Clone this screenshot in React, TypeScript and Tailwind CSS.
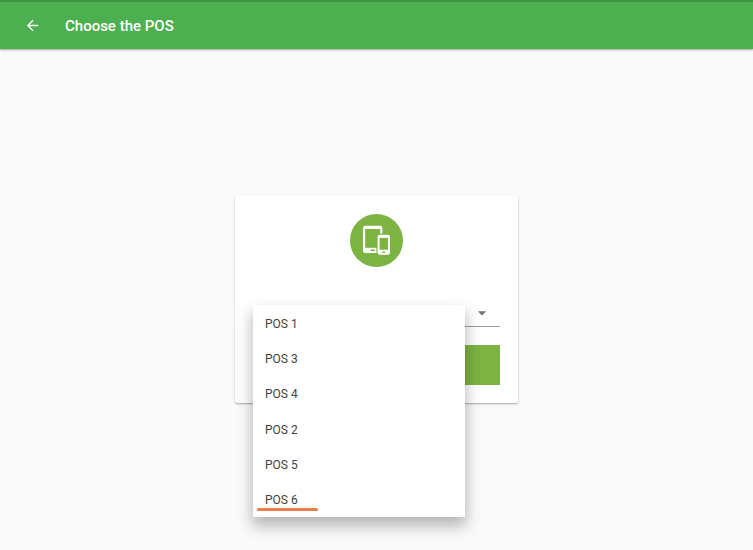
import { useState } from "react";
import { MdArrowBack, MdArrowDropDown } from "react-icons/md";

const terminals = ["POS 1", "POS 3", "POS 4", "POS 2", "POS 5", "POS 6"];

function DevicesIcon() {
  return (
    <svg viewBox="0 0 53 53" className="w-full h-full" aria-hidden="true">
      {/* Tablet */}
      <rect x="13" y="11.8" width="19.4" height="27.2" rx="2.2" fill="#fff" />
      <rect x="15.2" y="15" width="15" height="18.8" fill="#7cb342" />
      <rect x="20.6" y="35.6" width="4.4" height="1.5" rx="0.5" fill="#7cb342" />
      {/* Phone, with a gap cut out of the tablet behind it */}
      <rect x="26.4" y="19.4" width="15" height="22.6" rx="2" fill="#7cb342" />
      <rect x="27.6" y="20.8" width="12.4" height="20" rx="2.2" fill="#fff" />
      <rect x="29.6" y="23.9" width="8.4" height="11.8" fill="#7cb342" />
      <rect x="32.3" y="37.5" width="3" height="1.4" rx="0.6" fill="#7cb342" />
    </svg>
  );
}

export default function App() {
  const [open, setOpen] = useState(true);
  const [selected, setSelected] = useState("");

  const choose = (name: string) => {
    setSelected(name);
    setOpen(false);
  };

  return (
    <div className="min-h-screen flex flex-col bg-[#fafafa] font-[Roboto,sans-serif]">
      {/* App bar */}
      <header className="relative flex items-center gap-6 h-[49px] px-6 bg-[#4caf50] border-t-2 border-[#3d9142] text-white shadow-[0_1px_2px_rgba(0,0,0,0.35)]">
        <button type="button" aria-label="Back" className="w-[17px] h-[17px]">
          <MdArrowBack className="w-[17px] h-[17px]" />
        </button>
        <h1 className="text-[15px] leading-5 font-medium">Choose the POS</h1>
      </header>

      <main className="flex-1 flex items-center justify-center">
        <form
          className="w-[283px] p-[18px] rounded-xs bg-white shadow-[0_1px_2px_rgba(0,0,0,0.35)]"
          onSubmit={(e) => e.preventDefault()}
        >
          <div className="w-[53px] h-[53px] mx-auto rounded-full bg-[#7cb342]">
            <DevicesIcon />
          </div>

          <div className="relative mt-8 mb-[18px]">
            <select
              aria-label="POS"
              value={selected}
              onChange={(e) => setSelected(e.target.value)}
              onMouseDown={(e) => {
                e.preventDefault();
                setOpen(!open);
              }}
              className="block w-full h-7 pl-3 appearance-none border-b border-[#9e9e9e] text-xs text-[#424242]"
            >
              <option value="" />
              {terminals.map((name) => (
                <option key={name}>{name}</option>
              ))}
            </select>
            <MdArrowDropDown className="absolute right-2 top-1 w-5 h-5 text-[#757575] pointer-events-none" />

            {/* Open menu, over the field and the button */}
            {open && (
              <ul className="absolute left-0 top-1.5 z-10 w-[212px] grid grid-rows-6 h-[212px] bg-white shadow-[0_8px_14px_1px_rgba(0,0,0,0.28)]">
                {terminals.map((name) => (
                  <li key={name} className="relative">
                    <button
                      type="button"
                      onClick={() => choose(name)}
                      className="w-full h-full px-3 pt-0.5 text-left text-xs text-[#424242]"
                    >
                      {name}
                    </button>
                    {name === "POS 6" && (
                      <span className="absolute left-1 bottom-1.5 w-[61px] h-[3px] rounded-full bg-[#e8804a]" />
                    )}
                  </li>
                ))}
              </ul>
            )}
          </div>

          <button type="submit" aria-label="Continue" className="block w-full h-10 bg-[#7cb342]" />
        </form>
      </main>
    </div>
  );
}
